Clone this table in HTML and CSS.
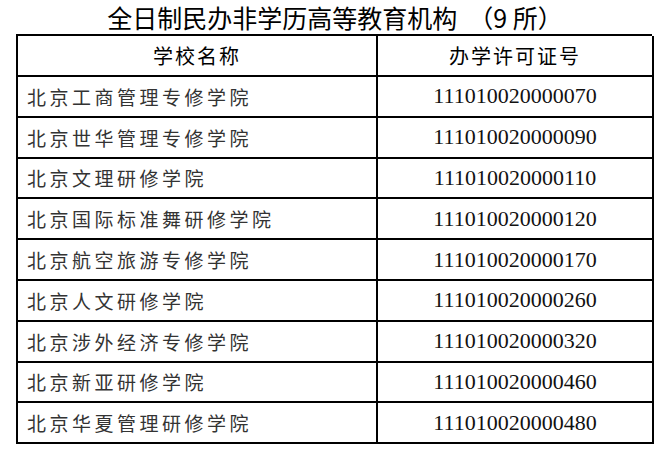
FILE: index.html
```html
<!DOCTYPE html>
<html lang="zh-CN">
<head>
<meta charset="utf-8">
<title>全日制民办非学历高等教育机构</title>
<link rel="stylesheet" href="styles.css">
</head>
<body>
<div class="page">
  <h1 class="title">全日制民办非学历高等教育机构  （9 所）</h1>
  <div class="grid">
    <div class="cell head">学校名称</div>
    <div class="cell head">办学许可证号</div>
    <div class="cell name">北京工商管理专修学院</div>
    <div class="cell num">111010020000070</div>
    <div class="cell name">北京世华管理专修学院</div>
    <div class="cell num">111010020000090</div>
    <div class="cell name">北京文理研修学院</div>
    <div class="cell num">111010020000110</div>
    <div class="cell name">北京国际标准舞研修学院</div>
    <div class="cell num">111010020000120</div>
    <div class="cell name">北京航空旅游专修学院</div>
    <div class="cell num">111010020000170</div>
    <div class="cell name">北京人文研修学院</div>
    <div class="cell num">111010020000260</div>
    <div class="cell name">北京涉外经济专修学院</div>
    <div class="cell num">111010020000320</div>
    <div class="cell name">北京新亚研修学院</div>
    <div class="cell num">111010020000460</div>
    <div class="cell name">北京华夏管理研修学院</div>
    <div class="cell num">111010020000480</div>
  </div>
</div>
</body>
</html>
```
FILE: styles.css
```css
html, body {
  margin: 0;
  padding: 0;
  background: #fff;
}
body {
  font-family: "Noto Sans CJK SC", "Noto Sans", sans-serif;
  color: #111;
}
.page {
  padding-left: 17px;
}
.title {
  margin: 0;
  height: 35px;
  width: 636px;
  display: flex;
  align-items: center;
  justify-content: center;
  font-size: 25px;
  font-weight: 400;
  line-height: 1;
  color: #000;
  white-space: pre;
}
.grid {
  display: grid;
  grid-template-columns: 360px 276px;
  grid-template-rows: 41px;
  grid-auto-rows: 40.8px;
  width: 636px;
  box-sizing: border-box;
  border-top: 2px solid #000;
  border-left: 2px solid #000;
  margin-top: -1px;
  margin-left: -1px;
}
.cell {
  box-sizing: border-box;
  border-right: 2px solid #000;
  border-bottom: 2px solid #000;
  display: flex;
  align-items: center;
}
.head {
  justify-content: center;
  font-size: 20px;
  letter-spacing: 2px;
  color: #000;
}
.name {
  padding-left: 9px;
  font-size: 19px;
  letter-spacing: 3.5px;
  color: #333;
}
.num {
  justify-content: center;
  font-family: "Liberation Serif", serif;
  font-size: 22px;
  color: #111;
}
```
